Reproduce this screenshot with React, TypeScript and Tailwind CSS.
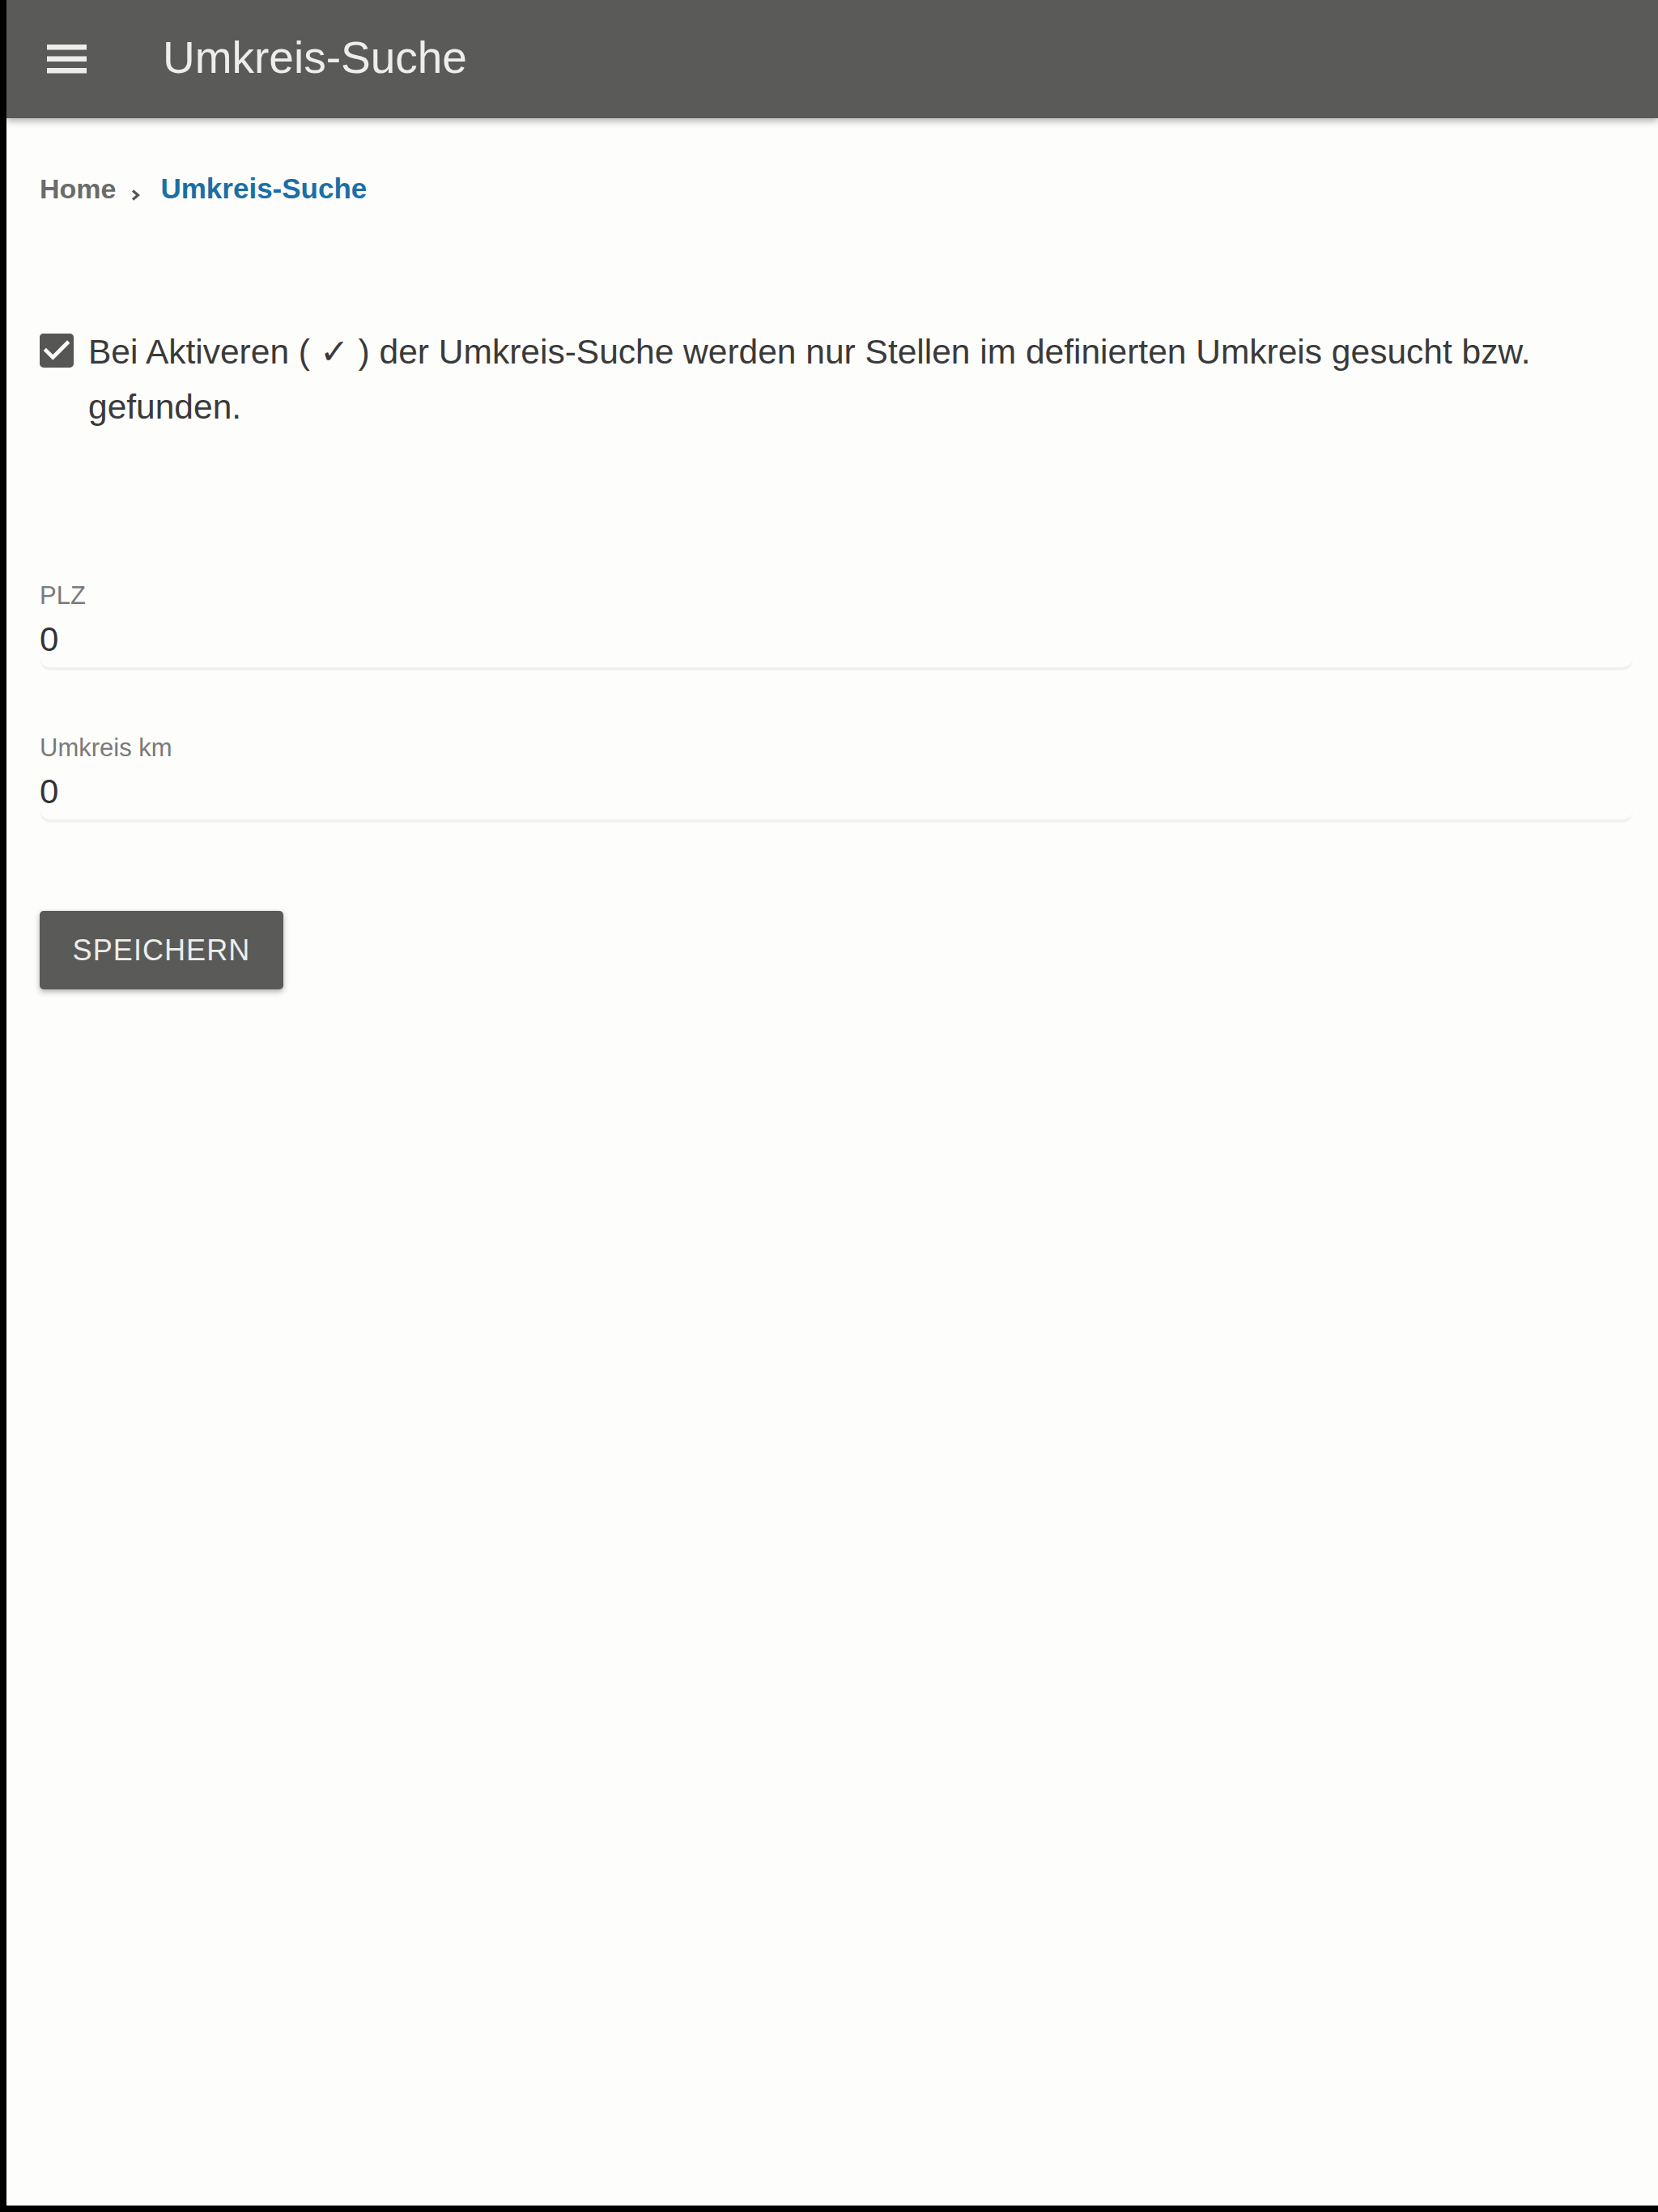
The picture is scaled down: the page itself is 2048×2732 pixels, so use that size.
import React from 'react';

function MenuIcon() {
  return (
    <svg width="50" height="36" viewBox="0 0 50 36" className="shrink-0">
      <rect x="0" y="0" width="49" height="6.5" fill="#ededeb" />
      <rect x="0" y="14.5" width="49" height="6.5" fill="#ededeb" />
      <rect x="0" y="29" width="49" height="6.5" fill="#ededeb" />
    </svg>
  );
}

function CheckBoxIcon() {
  return (
    <svg width="42" height="42" viewBox="3 3 18 18" className="shrink-0 mt-[11px]">
      <path
        fill="#565755"
        d="M19 3H5c-1.11 0-2 .9-2 2v14c0 1.1.89 2 2 2h14c1.11 0 2-.9 2-2V5c0-1.1-.89-2-2-2zm-9 14l-5-5 1.41-1.41L10 14.17l7.59-7.59L19 8l-9 9z"
      />
    </svg>
  );
}

interface FieldProps {
  label: string;
  value: string;
  className?: string;
}

function Field({ label, value, className }: FieldProps) {
  return (
    <div className={`flex flex-col ${className ?? ''}`}>
      <label className="text-[31px] leading-none text-[#7a7a7a]">{label}</label>
      <div className="mt-[18px] pb-[13px] text-[42px] leading-none text-[#333333] border-b-[4px] border-[#f0f0ee] rounded-b-[14px]">
        {value}
      </div>
    </div>
  );
}

export default function App() {
  return (
    <div className="h-[2732px] w-full flex flex-col bg-black pl-[8px] pb-[8px] font-['Liberation_Sans',Arial,sans-serif]">
      <div className="flex-1 flex flex-col bg-[#fdfdfb]">
        {/* App bar */}
        <header className="h-[146px] shrink-0 flex items-center pl-[50px] bg-[#5a5b59] shadow-[0_4px_8px_rgba(0,0,0,0.28)] relative z-10">
          <MenuIcon />
          <h1 className="ml-[93px] mb-[4px] text-[55px] leading-none font-normal text-[#ededeb]">Umkreis-Suche</h1>
        </header>

        <main className="flex flex-col pl-[41px] pr-[31px]">
          {/* Breadcrumb */}
          <nav className="flex items-start mt-[70px]">
            <span className="text-[34px] leading-none font-bold text-[#6b6b6b]">Home</span>
            <svg width="11" height="14" viewBox="0 0 11 14" className="mt-[18px] ml-[19px] mr-[25px] shrink-0">
              <polyline points="2,1.5 8.5,7 2,12.5" fill="none" stroke="#555" strokeWidth="3.2" />
            </svg>
            <span className="text-[35px] leading-none font-bold text-[#1b6fa6] -mt-[1px]">Umkreis-Suche</span>
          </nav>

          {/* Checkbox */}
          <div className="flex items-start mt-[151px]">
            <CheckBoxIcon />
            <p className="ml-[18px] text-[42.5px] leading-[68px] text-[#3a3a3a]">
              Bei Aktiveren ( ✓ ) der Umkreis-Suche werden nur Stellen im definierten Umkreis gesucht bzw. gefunden.
            </p>
          </div>

          {/* Fields */}
          <Field label="PLZ" value="0" className="mt-[183px]" />
          <Field label="Umkreis km" value="0" className="mt-[80px]" />

          <div className="mt-[109px]">
            <button className="h-[97px] w-[301px] rounded-[5px] bg-[#5a5b59] text-[36px] leading-none tracking-[0.03em] text-[#ededeb] shadow-[0_3px_7px_rgba(0,0,0,0.3)]">
              SPEICHERN
            </button>
          </div>
        </main>
      </div>
    </div>
  );
}
